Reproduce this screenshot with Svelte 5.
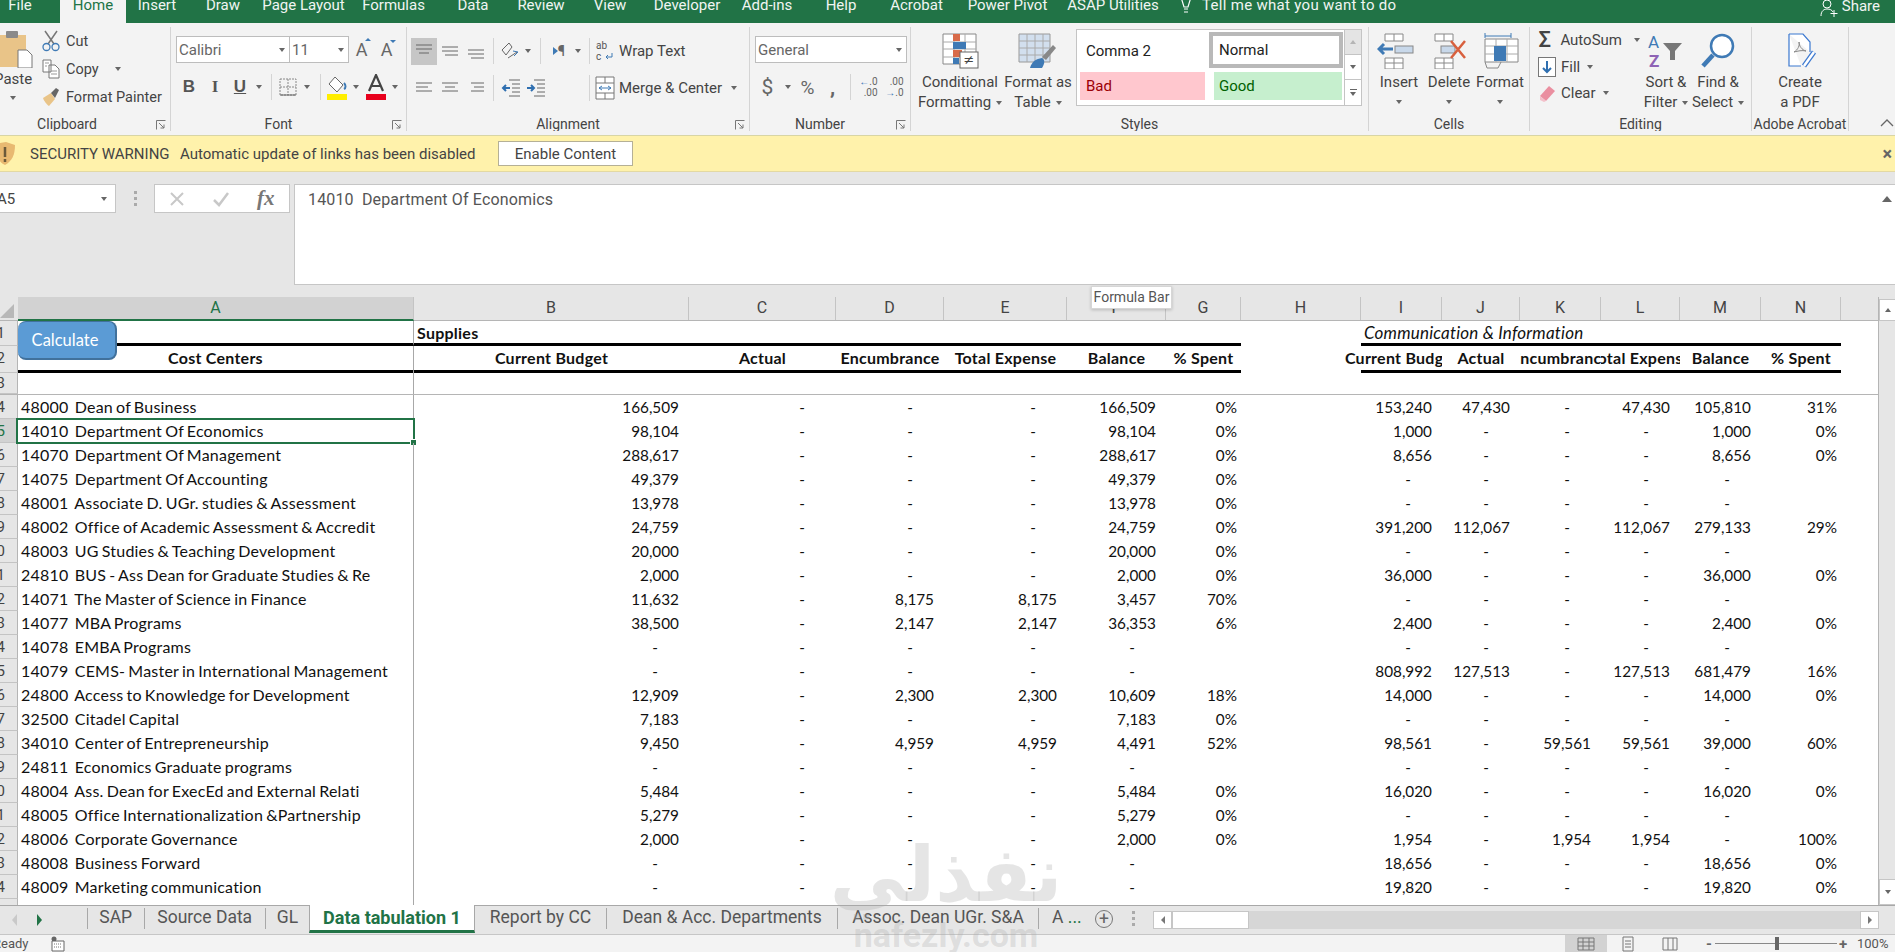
<script>
const tabs = [
  ['File',40],['Home',66],['Insert',62],['Draw',70],['Page Layout',91],['Formulas',89],['Data',70],['Review',66],['View',72],
  ['Developer',82],['Add-ins',78],['Help',70],['Acrobat',81],['Power Pivot',101],['ASAP Utilities',110]
];
const cols = [['A',396],['B',275],['C',147],['D',108],['E',123],['F',99],['G',75],['H',120],['I',81],['J',78],['K',81],['L',79],['M',81],['N',80],['',38]];
const D5 = ['-','-','-','-','-',''];
const rows = [
 ['48000  Dean of Business',['166,509','-','-','-','166,509','0%'],['153,240','47,430','-','47,430','105,810','31%']],
 ['14010  Department Of Economics',['98,104','-','-','-','98,104','0%'],['1,000','-','-','-','1,000','0%']],
 ['14070  Department Of Management',['288,617','-','-','-','288,617','0%'],['8,656','-','-','-','8,656','0%']],
 ['14075  Department Of Accounting',['49,379','-','-','-','49,379','0%'],D5],
 ['48001  Associate D. UGr. studies & Assessment',['13,978','-','-','-','13,978','0%'],D5],
 ['48002  Office of Academic Assessment & Accredit',['24,759','-','-','-','24,759','0%'],['391,200','112,067','-','112,067','279,133','29%']],
 ['48003  UG Studies & Teaching Development',['20,000','-','-','-','20,000','0%'],D5],
 ['24810  BUS - Ass Dean for Graduate Studies & Re',['2,000','-','-','-','2,000','0%'],['36,000','-','-','-','36,000','0%']],
 ['14071  The Master of Science in Finance',['11,632','-','8,175','8,175','3,457','70%'],D5],
 ['14077  MBA Programs',['38,500','-','2,147','2,147','36,353','6%'],['2,400','-','-','-','2,400','0%']],
 ['14078  EMBA Programs',D5,D5],
 ['14079  CEMS- Master in International Management',D5,['808,992','127,513','-','127,513','681,479','16%']],
 ['24800  Access to Knowledge for Development',['12,909','-','2,300','2,300','10,609','18%'],['14,000','-','-','-','14,000','0%']],
 ['32500  Citadel Capital',['7,183','-','-','-','7,183','0%'],D5],
 ['34010  Center of Entrepreneurship',['9,450','-','4,959','4,959','4,491','52%'],['98,561','-','59,561','59,561','39,000','60%']],
 ['24811  Economics Graduate programs',D5,D5],
 ['48004  Ass. Dean for ExecEd and External Relati',['5,484','-','-','-','5,484','0%'],['16,020','-','-','-','16,020','0%']],
 ['48005  Office Internationalization &Partnership',['5,279','-','-','-','5,279','0%'],D5],
 ['48006  Corporate Governance',['2,000','-','-','-','2,000','0%'],['1,954','-','1,954','1,954','-','100%']],
 ['48008  Business Forward',D5,['18,656','-','-','-','18,656','0%']],
 ['48009  Marketing communication',D5,['19,820','-','-','-','19,820','0%']]
];
const heads = ['Current Budget','Actual','Encumbrance','Total Expense','Balance','% Spent'];
const sheets = [['SAP',56.5],['Source Data',121.5],['GL',44],['Data tabulation 1',166],['Report by CC',131],['Dean & Acc. Departments',231],['Assoc. Dean UGr. S&A',201]];
const cls = (v) => (v === '-' ? 'dash' : v.includes('%') ? 'pct' : 'num');
</script>

{#snippet car()}<i class="car"></i>{/snippet}
{#snippet launcher()}<svg class="launch" viewBox="0 0 10 10" width="10" height="10"><path d="M.5 9.5V.5h9M3 3l5 5M8 4.500V8H4.500" fill="none" stroke="#777"/></svg>{/snippet}
{#snippet lines(a, b, c, d, y)}
  <svg width="20" height="20" viewBox="0 0 20 20"><path d="M{a} {y}H18M{b} {y+4}H{d}M{c} {y+8}H18" fill="none" stroke="#666" stroke-width="1"/></svg>
{/snippet}

<div class="app">
  <div class="tabbar">
    {#each tabs as t}
      <div class="tab" class:active={t[0]==='Home'} style="width:{t[1]}px">{t[0]}</div>
    {/each}
    <svg class="bulb" width="16" height="23" viewBox="0 0 16 23"><path d="M3 1l3 10h4l3-10M6 13h4M6 16h4" fill="none" stroke="#fff" stroke-width="1.200"/></svg>
    <div class="tab tell">Tell me what you want to do</div>
    <div class="share">
      <svg width="18" height="18" viewBox="0 0 18 18"><path d="M1 17c0-5 3-7 6-7s5 1 6 3M7 9a4 4 0 1 0 0-8 4 4 0 0 0 0 8M14 11v7M10.500 14.500h7" fill="none" stroke="#fff"/></svg>
      <span>Share</span>
    </div>
  </div>

  <div class="ribbon">
    <section class="grp g-clip">
      <div class="body clip-body">
        <div class="paste">
          <svg width="36" height="38" viewBox="0 0 36 38"><rect x="-4" y="5" width="30" height="32" fill="#e9c488"/><rect x="6" y="1" width="12" height="7" rx="1" fill="#8a8a8a"/><path d="M18 20h9l5 5v13H18z" fill="#fff" stroke="#777"/></svg>
          <span class="paste-t">Paste</span>
          {@render car()}
        </div>
        <div class="clip-rows">
          <div class="sm"><svg width="18" height="22" viewBox="0 0 18 22"><path d="M3 1l9 13M15 1L6 14" stroke="#777" stroke-width="1.500" fill="none"/><circle cx="4.500" cy="17" r="3.500" fill="none" stroke="#3f7ab5" stroke-width="1.300"/><circle cx="13.500" cy="17" r="3.500" fill="none" stroke="#3f7ab5" stroke-width="1.300"/></svg><span>Cut</span></div>
          <div class="sm"><svg width="18" height="20" viewBox="0 0 18 20"><path d="M1 1h8v12H1zM7 6h6l4 4v9H7z" fill="#fff" stroke="#777"/><path d="M3 4h4M3 7h2M9 12h6M9 15h6" stroke="#999"/></svg><span>Copy</span><i class="car ml10"></i></div>
          <div class="sm"><svg width="18" height="20" viewBox="0 0 18 20"><path d="M1 11l8-5 4 6-6 7c-2-1-5-5-6-8z" fill="#e9c488"/><path d="M9 6l5-5 3 2-4 8z" fill="#666"/></svg><span>Format Painter</span></div>
        </div>
      </div>
      <div class="lab off36"><span>Clipboard</span>{@render launcher()}</div>
    </section>

    <section class="grp g-font">
      <div class="body">
        <div class="font-r1">
          <div class="combo c-name"><span>Calibri</span>{@render car()}</div>
          <div class="combo c-size"><span>11</span>{@render car()}</div>
          <span class="aa">A<sup class="up"></sup></span>
          <span class="aa">A<sup class="dn"></sup></span>
        </div>
        <div class="font-r2 cells2">
          <b class="fmt">B</b><i class="fmt serif">I</i><u class="fmt ub">U</u>{@render car()}<em class="sep"></em>
          <svg width="18" height="18" viewBox="0 0 18 18"><path d="M1 1h16v16H1zM9 1v16M1 9h16" fill="none" stroke="#888" stroke-dasharray="2 1"/><path d="M1 17h16" stroke="#666"/></svg>{@render car()}<em class="sep"></em>
          <svg width="22" height="26" viewBox="0 0 22 26"><path d="M9 3l8 8-6 7-8-8z" fill="#fff" stroke="#666"/><path d="M18 9c2 2 2 5 0 6" stroke="#3f7ab5" stroke-width="2" fill="none"/><rect x="1" y="20" width="20" height="6" fill="#ffee00"/></svg>{@render car()}
          <svg width="22" height="26" viewBox="0 0 22 26"><path d="M4 17L11 1l7 16M7 12h8" fill="none" stroke="#444" stroke-width="2.200"/><rect x="1" y="20" width="20" height="6" fill="#e8001c"/></svg>{@render car()}
        </div>
      </div>
      <div class="lab off20"><span>Font</span>{@render launcher()}</div>
    </section>

    <section class="grp g-align">
      <div class="body">
        <div class="al-r1 cells2">
          <div class="hl"><svg width="20" height="20" viewBox="0 0 20 20"><path d="M2 4H18M2 8H18M5 12H15" stroke="#666" fill="none"/></svg></div>
          {@render lines(2,2,5,18,6)}
          {@render lines(2,2,5,18,9)}
          <em class="sep"></em>
          <svg width="20" height="20" viewBox="0 0 20 20"><path d="M2 9l7-7 3 4-6 8zM8 17l9-6" fill="none" stroke="#666"/><path d="M14 15l4-4-5-1" fill="none" stroke="#3f7ab5"/></svg>
          {@render car()}
          <em class="sep"></em>
          <span class="rtl"><i class="tri"></i>¶</span>
          {@render car()}
          <em class="sep"></em>
          <div class="sm wide"><svg class="wrapi" width="20" height="22" viewBox="0 0 20 22"><text x="1" y="9" font-size="10" font-family="Roboto" fill="#555">ab</text><text x="1" y="20" font-size="10" font-family="Roboto" fill="#555">c</text><path d="M17 13v4h-6m2-2l-2 2 2 2" fill="none" stroke="#3f7ab5"/></svg><span>Wrap Text</span></div>
        </div>
        <div class="al-r2 cells2">
          {@render lines(2,2,2,14,5)}
          {@render lines(2,5,2,15,5)}
          {@render lines(5,8,5,18,5)}
          <em class="sep"></em>
          <svg width="20" height="20" viewBox="0 0 20 20"><path d="M8 2h11M11 6h8M11 10h8M11 14h8M8 18h11" stroke="#666"/><path d="M9 10H2m3-3l-3 3 3 3" stroke="#2f6fb0" stroke-width="2" fill="none"/></svg>
          <svg width="20" height="20" viewBox="0 0 20 20"><path d="M8 2h11M11 6h8M11 10h8M11 14h8M8 18h11" stroke="#666"/><path d="M1 10h7m-3-3l3 3-3 3" stroke="#2f6fb0" stroke-width="2" fill="none"/></svg>
          <span></span>
          <em class="sep"></em>
          <div class="sm wide"><svg class="wrapi" width="20" height="24" viewBox="0 0 20 24"><path d="M1 1h18v22H1zM1 7h18M1 17h18M10 1v6M10 17v6" fill="#fff" stroke="#777"/><path d="M4 12h12m-3-2l3 2-3 2M7 10l-3 2 3 2" fill="none" stroke="#3f7ab5"/></svg><span>Merge &amp; Center</span><i class="car ml5"></i></div>
        </div>
      </div>
      <div class="lab off20"><span>Alignment</span>{@render launcher()}</div>
    </section>

    <section class="grp g-num">
      <div class="body">
        <div class="combo c-gen"><span>General</span>{@render car()}</div>
        <div class="num-r2 cells2">
          <span class="cur">$</span>{@render car()}<span class="cur pc">%</span><span class="cur cm">,</span><em class="sep"></em>
          <span class="dec"><i class="blue">←</i>.0<br/>.00</span><span class="dec">.00<br/><i class="blue">→</i>.0</span>
        </div>
      </div>
      <div class="lab off20"><span>Number</span>{@render launcher()}</div>
    </section>

    <section class="grp g-styles">
      <div class="body styles-body">
        <div class="big b-cf">
          <svg width="40" height="36" viewBox="0 0 40 36"><path d="M3 1h33v30H3z" fill="#fff" stroke="#888"/><path d="M14 1v30M25 1v30M3 9h33M3 16h33M3 24h33" stroke="#aaa"/><rect x="13" y="1" width="7" height="7" fill="#d86b4a"/><rect x="13" y="9" width="13" height="7" fill="#3f7ab5"/><rect x="13" y="17" width="9" height="7" fill="#d86b4a"/><rect x="13" y="25" width="6" height="6" fill="#3f7ab5"/><rect x="20" y="19" width="18" height="16" fill="#fff" stroke="#666"/><text x="29" y="31" font-size="13" text-anchor="middle" font-family="DejaVu Sans" fill="#444">≠</text></svg>
          <span>Conditional</span><span>Formatting<i class="car ml5"></i></span>
        </div>
        <div class="big b-ft">
          <svg width="40" height="36" viewBox="0 0 40 36"><path d="M1 1h31v28H1z" fill="#d2dfee" stroke="#999"/><path d="M1 8h31M1 15h31M1 22h31M9 1v28M17 1v28M25 1v28" stroke="#aaa"/><path d="M24 24L35 12l3 3-10 12z" fill="#888"/><path d="M12 35c2-7 6-9 12-10 3 2 3 5 0 10z" fill="#3f7ab5"/></svg>
          <span>Format as</span><span>Table<i class="car ml5"></i></span>
        </div>
        <div class="gallery">
          <div class="gmain">
            <div class="st st-c">Comma 2</div>
            <div class="st st-n">Normal</div>
            <div class="st st-b">Bad</div>
            <div class="st st-g">Good</div>
          </div>
          <div class="gscroll">
            <div class="gs up-b"><i class="car flip"></i></div>
            <div class="gs"><i class="car"></i></div>
            <div class="gs last"><div class="mbar"></div><i class="car"></i></div>
          </div>
        </div>
      </div>
      <div class="lab"><span>Styles</span></div>
    </section>

    <section class="grp g-cells">
      <div class="body cells-body">
        <div class="big b-c">
          <svg width="44" height="36" viewBox="0 0 44 36"><path d="M8 1h18v7H8zM17 1v7M8 25h18v11H8zM17 25v11M8 30h18" fill="#fff" stroke="#888"/><rect x="18" y="13" width="18" height="7" fill="#c8d8ea" stroke="#888"/><path d="M2 16h14M7 11l-5 5 5 5" fill="none" stroke="#3f7ab5" stroke-width="3"/></svg>
          <span>Insert</span>{@render car()}
        </div>
        <div class="big b-c">
          <svg width="44" height="36" viewBox="0 0 44 36"><path d="M8 1h18v7H8zM17 1v7M8 25h18v11H8zM17 25v11M8 30h18" fill="#fff" stroke="#888"/><rect x="14" y="13" width="14" height="7" fill="#c8d8ea" stroke="#888"/><path d="M24 8l14 17M38 8L24 25" stroke="#d8603e" stroke-width="2.500"/></svg>
          <span>Delete</span>{@render car()}
        </div>
        <div class="big b-c w52">
          <svg width="44" height="36" viewBox="0 0 44 36"><path d="M7 6h33v23H7z" fill="#fff" stroke="#888"/><path d="M18 6v23M29 6v23M7 13h33M7 21h33" stroke="#aaa"/><rect x="16" y="13" width="12" height="15" fill="#3f7ab5"/><path d="M7 3h26M7 0v5M33 0v5" stroke="#3f7ab5"/><path d="M7 29l2 6h11l3-6" fill="none" stroke="#888"/></svg>
          <span>Format</span>{@render car()}
        </div>
      </div>
      <div class="lab"><span>Cells</span></div>
    </section>

    <section class="grp g-edit">
      <div class="body edit-body">
        <div class="edit-rows">
          <div class="sm"><span class="sigma">Σ</span><span>AutoSum</span><i class="car ml10"></i></div>
          <div class="sm"><svg width="18" height="20" viewBox="0 0 18 20"><rect x=".5" y=".5" width="17" height="19" fill="#fff" stroke="#777"/><path d="M9 4v11M5 11l4 4 4-4" fill="none" stroke="#2f6fb0" stroke-width="2"/></svg><span>Fill</span><i class="car ml5"></i></div>
          <div class="sm"><svg width="18" height="20" viewBox="0 0 18 20"><path d="M2 13L11 3l6 5-9 10z" fill="#ea8fa0"/><path d="M2 13l6 5-2 1-4-2z" fill="#f3c0ca"/></svg><span>Clear</span><i class="car ml5"></i></div>
        </div>
        <div class="big b-e">
          <svg width="40" height="36" viewBox="0 0 40 36"><text x="2" y="15" font-size="17" font-family="Roboto" fill="#3f7ab5">A</text><text x="3" y="34" font-size="17" font-family="Roboto" font-weight="700" fill="#8e63b5">Z</text><path d="M17 10h19l-7 8v9h-5v-9z" fill="#777"/></svg>
          <span>Sort &amp;</span><span>Filter<i class="car ml5"></i></span>
        </div>
        <div class="big b-e">
          <svg width="40" height="36" viewBox="0 0 40 36"><circle cx="24" cy="13" r="11" fill="#fff" stroke="#3f7ab5" stroke-width="2.500"/><path d="M15 22L5 33" stroke="#3f7ab5" stroke-width="4.500"/></svg>
          <span>Find &amp;</span><span>Select<i class="car ml5"></i></span>
        </div>
      </div>
      <div class="lab"><span>Editing</span></div>
    </section>

    <section class="grp g-acro">
      <div class="body acro-body">
        <div class="big">
          <svg width="40" height="36" viewBox="0 0 40 36"><path d="M9 1h14l7 8v10M9 1v32h12" fill="#fff" stroke="#3b78d0" stroke-width="1.200"/><path d="M14 19c4-2 6-7 5-10 0 4 3 8 7 9-4-1-8 0-12 1z" fill="none" stroke="#888"/><path d="M24 33l10-14" stroke="#3b78d0" stroke-width="5" fill="none"/><path d="M24 33l10-14" stroke="#fff" stroke-width="2.500" fill="none"/></svg>
          <span>Create</span><span>a PDF</span>
        </div>
      </div>
      <div class="lab"><span>Adobe Acrobat</span></div>
    </section>

    <svg class="collapse" width="14" height="8" viewBox="0 0 14 8"><path d="M1 7l6-6 6 6" fill="none" stroke="#666" stroke-width="1.300"/></svg>
  </div>

  <div class="secbar">
    <svg class="shield" width="16" height="24" viewBox="0 0 16 24"><path d="M-6 2L6 0l9 3c0 10-3 16-10 20C-2 20-6 10-6 2z" fill="#e8b971"/><path d="M5 5v10M5 17v3" stroke="#6b5a3a" stroke-width="2.500"/></svg>
    <span class="sec-t">SECURITY WARNING</span>
    <span class="sec-m">Automatic update of links has been disabled</span>
    <button class="enable">Enable Content</button>
    <span class="sec-x">×</span>
  </div>

  <div class="fbar">
    <div class="namebox"><span>A5</span>{@render car()}</div>
    <div class="dots"><i></i><i></i><i></i></div>
    <div class="fbtns">
      <svg width="16" height="16" viewBox="0 0 16 16"><path d="M2 2l12 12M14 2L2 14" stroke="#c8c8c8" stroke-width="2"/></svg>
      <svg width="18" height="16" viewBox="0 0 18 16"><path d="M2 9l5 5L16 2" fill="none" stroke="#c8c8c8" stroke-width="2.500"/></svg>
      <span class="fx">fx</span>
    </div>
    <div class="finput">
      <span class="ftext">14010  Department Of Economics</span>
      <svg class="fcol" width="10" height="6" viewBox="0 0 10 6"><path d="M0 6l5-6 5 6z" fill="#666"/></svg>
    </div>
  </div>

  <div class="sheet">
    <div class="grid">
      <div class="colhead">
        <div class="corner"><i></i></div>
        {#each cols as c}
          <div class="ch" class:sel={c[0]==='A'} style="width:{c[1]}px">{c[0]}</div>
        {/each}
      </div>

      <div class="row r1 heavy">
        <div class="rh">1</div>
        <div class="c a"></div>
        <div class="c sup">Supplies</div>
        <div class="c span5"></div>
        <div class="c gapH"></div>
        <div class="c comm"><span>Communication &amp; Information</span></div>
        <div class="c tail"></div>
      </div>
      <div class="row r2 heavy">
        <div class="rh">2</div>
        <div class="c a hc">Cost Centers</div>
        {#each heads as h, i}<div class="c hd h{i}">{h}</div>{/each}
        <div class="c gapH"></div>
        {#each heads as h, i}<div class="c hd k{i}">{h}</div>{/each}
        <div class="c tail"></div>
      </div>
      <div class="row r3">
        <div class="rh">3</div>
        <div class="c a"></div>
      </div>

      {#each rows as r, n}
        <div class="row" class:cur-row={n===1}>
          <div class="rh">{n+4}</div>
          <div class="c a txt">{r[0]}{#if n===1}<i class="selbox"></i>{/if}</div>
          {#each r[1] as v, i}<div class="c {cls(v)} h{i}">{v}</div>{/each}
          <div class="c gapH"></div>
          {#each r[2] as v, i}<div class="c {cls(v)} k{i}">{v}</div>{/each}
          <div class="c tail"></div>
        </div>
      {/each}
      <div class="row rlast"><div class="rh"></div><div class="c a"></div></div>

      <button class="calc">Calculate</button>
    </div>
    <div class="vscroll">
      <div class="vb"><i class="car flip"></i></div>
      <div class="vb bot"><i class="car"></i></div>
    </div>
    <div class="tooltip">Formula Bar</div>
  </div>

  <div class="tabstrip">
    <div class="nav"><span class="navl"></span><span class="navr"></span></div>
    {#each sheets as s}
      <div class="sh" class:on={s[0]==='Data tabulation 1'} style="width:{s[1]}px">{s[0]}</div>
    {/each}
    <div class="more">A <b>...</b></div>
    <div class="plus">+</div>
    <div class="dots hd3"><i></i><i></i><i></i></div>
    <div class="hbar">
      <div class="hb"><i class="tl"></i></div>
      <div class="thumb"></div>
      <div class="track"></div>
      <div class="hb"><i class="tr"></i></div>
    </div>
  </div>

  <div class="status">
    <span class="ready">Ready</span>
    <svg class="macro" width="14" height="16" viewBox="0 0 14 16"><circle cx="3" cy="3" r="2.500" fill="#666"/><path d="M1 5h12v10H1z" fill="#fff" stroke="#666"/><path d="M3 8h8M3 11h8" stroke="#777" stroke-dasharray="1 1"/></svg>
    <div class="views">
      <div class="v on"><svg width="18" height="14" viewBox="0 0 18 14"><path d="M1 1h16v12H1zM6 1v12M12 1v12M1 5h16M1 9h16" fill="none" stroke="#777"/></svg></div>
      <div class="v"><svg width="12" height="16" viewBox="0 0 12 16"><path d="M1 1h10v14H1zM3 5h6M3 8h6M3 11h6" fill="none" stroke="#777"/></svg></div>
      <div class="v"><svg width="18" height="14" viewBox="0 0 18 14"><path d="M2 1h14v12H2zM7 1v12M12 1v12" fill="none" stroke="#777"/></svg></div>
    </div>
    <div class="zoom">
      <span class="zm">-</span>
      <div class="zline"><i></i></div>
      <span class="zm">+</span>
      <span class="zp">100%</span>
    </div>
  </div>

  <div class="wm" aria-hidden="true">
    <div class="wm1">نفذلي</div>
    <div class="wm2">nafezly.com</div>
  </div>
</div>

<style>
:global(body){margin:0;background:#e6e6e6;}
.app{position:relative;width:1895px;height:952px;overflow:hidden;font-family:Roboto,sans-serif;color:#444;display:flex;flex-direction:column;}
i,em{font-style:normal;display:block;}
.car{display:inline-block;width:0;height:0;border:3.5px solid transparent;border-top:4px solid #666;border-bottom:0;flex:none;vertical-align:middle;}
.car.flip{transform:rotate(180deg);}
.ml5{margin-left:5px}.ml10{margin-left:10px}

/* title tabs */
.tabbar{height:23px;background:#217346;display:flex;overflow:hidden;color:#f0f5f2;font-size:15px;flex:none;}
.tab{height:28px;line-height:20px;margin-top:-5px;text-align:center;flex:none;}
.tab.active{background:#f3f3f3;color:#217346;margin-left:20px;}
.bulb{margin-left:10px;margin-top:-4px;flex:none;}
.tell{margin-left:8px;letter-spacing:.3px;}
.share{margin-left:auto;padding-right:15px;display:flex;align-items:flex-start;gap:4px;}
.share svg{margin-top:-1px;}
.share span{line-height:16px;margin-top:-2px;}

/* ribbon */
.ribbon{height:112px;flex:none;background:#f3f3f3;display:flex;padding:4px 0;box-sizing:border-box;font-size:15px;color:#444;white-space:nowrap;}
.grp{height:104px;display:flex;flex-direction:column;border-right:1px solid #d4d4d4;box-sizing:border-box;flex:none;overflow:hidden;}
.g-clip{width:171px}.g-font{width:236px}.g-align{width:343px}.g-num{width:161px}.g-styles{width:458px}.g-cells{width:161px}.g-edit{width:222px}.g-acro{width:97px}
.body{height:89px;flex:none;}
.lab{height:14px;line-height:14px;font-size:14px;text-align:center;position:relative;color:#444;margin-top:1px;box-sizing:border-box;}
.off36{padding-right:36px;}
.off20{padding-right:20px;}
.launch{position:absolute;right:4px;top:3px;}
.sm{display:flex;align-items:center;gap:6px;height:28px;}
.cells2{display:grid;align-items:center;justify-items:center;}
.sep{width:1px;height:26px;background:#d4d4d4;}

.clip-body{display:grid;grid-template-columns:42px 1fr;}
.paste{display:flex;flex-direction:column;align-items:flex-start;padding-top:3px;}
.paste-t{margin:0 0 0 -6px;line-height:18px;margin-top:2px;}
.paste .car{margin:8px 0 0 10px;}
.clip-rows .sm{height:28px;font-size:14.500px;}

.font-r1{display:flex;align-items:center;margin:9px 0 0 5px;height:27px;}
.combo{height:27px;box-sizing:border-box;border:1px solid #bdbdbd;background:#fff;display:flex;align-items:center;justify-content:space-between;padding:0 4px 0 2px;color:#666;font-size:15px;}
.c-name{width:114px}.c-size{width:60px;margin-left:-1px;}
.c-gen{width:152px;margin:9px 0 0 5px;}
.aa{width:25px;text-align:center;font-size:18px;color:#666;position:relative;}
.aa sup{position:absolute;right:3px;width:0;height:0;border:3px solid transparent;}
.aa .up{top:-1px;border-bottom:3px solid #3f7ab5;border-top:0}
.aa .dn{top:1px;border-top:3px solid #3f7ab5;border-bottom:0}
.font-r2{grid-template-columns:26px 26px 24px 14px 10px 24px 14px 12px 22px 16px 24px 14px;margin:11px 0 0 5px;height:26px;}
.fmt{font-size:17px;color:#555;font-family:"Liberation Sans",sans-serif;}
.serif{font-family:"Liberation Serif",serif;font-weight:700;}
.ub{font-weight:700;}

.al-r1{grid-template-columns:26px 26px 25px 10px 24px 12px 12px 26px 11px 12px 150px;margin:10px 0 0 4px;height:27px;}
.al-r2{grid-template-columns:26px 26px 25px 10px 25px 26px 34px 12px 150px;margin:10px 0 0 4px;height:26px;}
.hl{width:26px;height:27px;background:#c6c6c6;display:flex;align-items:center;justify-content:center;}
.rtl{display:flex;align-items:center;font-size:15px;color:#666;}
.tri{width:0;height:0;border:4px solid transparent;border-left:5px solid #3f7ab5;border-right:0;}
.wide{justify-self:start;gap:4px;}

.num-r2{grid-template-columns:25px 15px 25px 25px 11px 25px 27px;margin:11px 0 0 5px;height:26px;}
.cur{font-size:21px;color:#666;}
.pc{font-size:19px;}
.cm{font-weight:700;line-height:16px;}
.dec{font-size:10px;line-height:11px;color:#666;text-align:right;}
.dec i{display:inline;color:#2f6fb0;font-weight:700;}

.styles-body{display:flex;padding-left:9px;}
.big{display:flex;flex-direction:column;align-items:center;padding-top:6px;box-sizing:border-box;height:89px;line-height:20px;flex:none;}
.big svg{height:36px;margin-bottom:3px;flex:none;}
.big .car{margin-top:8px;}
.big span .car{margin-top:0;}
.b-cf{width:80px}.b-ft{width:76px}
.gallery{margin:2px 0 0 0;width:286px;height:77px;box-sizing:border-box;border:1px solid #c4c4c4;background:#fff;display:flex;color:#222;}
.gmain{width:267px;flex:none;display:grid;grid-template-columns:132px 135px;grid-template-rows:41px 34px;}
.gscroll{flex:1;display:flex;flex-direction:column;}
.st{display:flex;align-items:center;box-sizing:border-box;font-size:15px;}
.st-c{padding-left:9px;}
.st-n{border:4px solid #b9b9b9;height:36px;margin:2px 1px 0 0;padding-left:6px;}
.st-b{background:#ffc7ce;color:#9c0006;margin:1px 4px 5px 3px;padding-left:6px;}
.st-g{background:#c6efce;color:#006100;margin:1px 2px 5px 5px;padding-left:5px;}
.gs{height:25px;display:flex;align-items:center;justify-content:center;flex-direction:column;gap:2px;border-left:1px solid #c4c4c4;border-bottom:1px solid #c4c4c4;box-sizing:border-box;}
.up-b{background:#e4e4e4;}
.up-b .car{border-top-color:#b5b5b5;}
.gs.last{border-bottom:0;}
.mbar{width:7px;height:1px;background:#666;}

.cells-body{display:flex;padding-left:5px;}
.b-c{width:50px}.w52{width:52px}
.edit-body{display:flex;padding-left:8px;}
.edit-rows{width:102px;flex:none;}
.edit-rows .sm{height:26.500px;gap:9px;}
.edit-rows svg + span{margin-left:-4px;}
.edit-rows .sm .car{margin-left:-2px;}
.edit-rows .sm .ml10{margin-left:3px;}
.sigma{font-size:22px;width:18px;text-align:center;color:#444;font-weight:500;line-height:20px;}
.b-e{width:52px}
.acro-body{display:flex;justify-content:center;}
.collapse{align-self:flex-end;margin:0 0 4px 31px;}

/* security bar */
.secbar{height:37px;box-sizing:border-box;flex:none;background:#fff2ab;border-top:1px solid #d8d5a5;border-bottom:1px solid #e3d9a3;display:flex;align-items:center;font-size:15px;color:#444;position:relative;}
.shield{flex:none;}
.sec-t{margin-left:14px;width:150px;flex:none;}
.sec-m{flex:none;width:318px;}
.enable{width:135px;height:25px;box-sizing:border-box;background:#fff;border:1px solid #b5b096;font:15px Roboto,sans-serif;color:#444;padding:0;}
.sec-x{position:absolute;right:3px;font-size:18px;font-weight:700;color:#666;}

/* formula bar */
.fbar{height:125px;flex:none;display:flex;background:#e6e6e6;align-items:flex-start;padding-top:12px;box-sizing:border-box;}
.namebox{width:116px;height:29px;box-sizing:border-box;background:#fff;border:1px solid #c6c6c6;border-left:0;display:flex;justify-content:space-between;align-items:center;padding-right:8px;color:#444;font-size:15px;}
.namebox span{margin-left:-3px;}
.dots{width:38px;flex:none;height:29px;display:flex;flex-direction:column;justify-content:center;align-items:center;gap:3px;}
.dots i{width:3px;height:3px;background:#aaa;}
.fbtns{width:136px;height:29px;box-sizing:border-box;background:#fff;border:1px solid #c6c6c6;display:flex;align-items:center;justify-content:space-around;padding:0 1px;flex:none;}
.fx{font:italic 700 21px "Liberation Serif",serif;color:#777;}
.finput{margin-left:4px;flex:1;height:101px;box-sizing:border-box;background:#fff;border:1px solid #c6c6c6;border-right:0;position:relative;padding:5px 0 0 13px;font-size:16px;letter-spacing:.15px;color:#555;}
.ftext{white-space:pre;}
.fcol{position:absolute;right:3px;top:11px;}

/* sheet */
.sheet{height:608px;flex:none;display:flex;background:#fff;position:relative;}
.grid{width:1879px;flex:none;position:relative;overflow:hidden;font-family:Lato,sans-serif;font-size:15.300px;color:#111;border-right:1px solid #b5b5b5;box-sizing:border-box;--col:396px 275px 147px 108px 123px 99px 75px 120px 81px 78px 81px 79px 81px 80px 38px;}
.colhead{display:flex;height:24px;background:#e6e6e6;border-bottom:1px solid #b5b5b5;box-sizing:border-box;font-family:Roboto,sans-serif;font-size:16px;color:#444;}
.corner{width:18px;flex:none;position:relative;}
.corner i{position:absolute;left:0;bottom:2px;width:0;height:0;border-bottom:14px solid #b8b8b8;border-left:14px solid transparent;}
.ch{flex:none;box-sizing:border-box;border-right:1px solid #c4c4c4;text-align:center;line-height:22px;}
.ch.sel{background:#d2d2d2;color:#217346;border-bottom:2px solid #217346;height:24px;}
.row{display:grid;grid-template-columns:18px var(--col);height:24px;line-height:24px;white-space:nowrap;}
.rh{background:#e6e6e6;border-right:1px solid #b5b5b5;border-bottom:1px solid #c4c4c4;box-sizing:border-box;display:flex;justify-content:flex-end;padding-right:12px;font-family:Roboto,sans-serif;font-size:15px;color:#444;overflow:hidden;}
.cur-row .rh{background:#d2d2d2;color:#217346;}
.c{overflow:hidden;box-sizing:border-box;position:relative;}
.a{border-right:1px solid #a8a8a8;overflow:visible;}
.txt{padding-left:3px;white-space:pre;overflow:hidden;font-size:16px;letter-spacing:.22px;word-spacing:-1.200px;}
.num{text-align:right;padding-right:10px;}
.dash{text-align:right;padding-right:31px;}
.pct{text-align:right;padding-right:4px;}
.hd{font-weight:700;display:flex;justify-content:center;font-size:16px;letter-spacing:.25px;}
.hc{font-weight:700;text-align:center;font-size:16px;letter-spacing:.25px;}
.k0.hd{overflow:visible;}
.k1.hd{background:#fff;}
.r1,.r2{position:relative;height:25px;}
.r1 .rh,.r2 .rh{border-bottom:1px solid #c4c4c4;}
.r1 .c:not(.gapH):not(.tail),.r2 .c:not(.gapH):not(.tail){border-bottom:3px solid #000;}
.r3{height:24px;border-bottom:1px solid #b5b5b5;box-sizing:border-box;}
.sup{font-weight:700;padding-left:3px;font-size:16px;letter-spacing:.25px;}
.span5{grid-column:span 5;}
.comm{grid-column:span 6;font-style:italic;padding-left:3px;font-size:17px;letter-spacing:.2px;}
.selbox{position:absolute;left:-2px;top:-1px;right:-2px;bottom:-1px;border:2px solid #217346;pointer-events:none;}
.selbox::after{content:"";position:absolute;right:-4px;bottom:-4px;width:5px;height:5px;background:#217346;border:1px solid #fff;}
.txt:has(.selbox){overflow:visible;}
.calc{position:absolute;left:18px;top:24px;width:99px;height:39px;box-sizing:border-box;background:#5b9bd5;color:#fff;border:2px solid #41719c;border-left:0;border-top:1px solid #41719c;border-radius:8px;font:16.500px Lato,sans-serif;padding:0 3px 0 0;}
.tooltip{position:absolute;left:1091px;top:-11px;width:81px;height:23px;box-sizing:border-box;background:#fff;border:1px solid #d6d6d6;box-shadow:0 1px 3px rgba(0,0,0,.2);font:14px Roboto,sans-serif;color:#555;text-align:center;line-height:21px;white-space:nowrap;z-index:2;}
.vscroll{flex:1;background:#e6e6e6;display:flex;flex-direction:column;justify-content:space-between;padding-top:2px;}
.vb{height:22px;background:#fff;border:1px solid #c6c6c6;border-right:0;display:flex;align-items:center;justify-content:center;box-sizing:border-box;}
.vb.bot{height:26px;}

/* sheet tabs */
.tabstrip{height:29px;flex:none;background:#e6e6e6;border-top:1px solid #a8a8a8;box-sizing:border-box;display:flex;font-size:17.500px;color:#555;white-space:nowrap;}
.nav{width:87px;flex:none;display:flex;align-items:center;padding-left:12px;gap:20px;box-sizing:border-box;}
.navl{width:0;height:0;border:6px solid transparent;border-right:5px solid #c9c9c9;border-left:0;}
.navr{width:0;height:0;border:6px solid transparent;border-left:5px solid #217346;border-right:0;}
.sh{flex:none;box-sizing:border-box;border-left:1px solid #a8a8a8;text-align:center;line-height:19px;height:21px;margin-top:2px;overflow:hidden;}
.sh.on{background:#fff;height:28px;margin-top:-1px;line-height:25px;color:#217346;font-weight:700;border:1px solid #a8a8a8;border-top:0;border-bottom:3px solid #217346;font-size:18px;}
.sh.on + .sh{border-left:0;}
.more{width:52px;flex:none;border-left:1px solid #a8a8a8;height:21px;margin-top:2px;line-height:19px;padding-left:13px;box-sizing:border-box;}
.more b{font-weight:400;color:#217346;}
.plus{width:18px;height:18px;border:1px solid #777;border-radius:50%;box-sizing:border-box;flex:none;margin:4px 0 0 5px;text-align:center;line-height:16px;color:#666;}
.hd3{width:40px;height:24px;}
.hbar{display:flex;width:726px;flex:none;height:18px;margin-top:5px;background:#d6d6d6;}
.hb{width:19px;height:18px;background:#fff;border:1px solid #c6c6c6;box-sizing:border-box;display:flex;align-items:center;justify-content:center;flex:none;}
.tl{width:0;height:0;border:4px solid transparent;border-right:4px solid #777;border-left:0;}
.tr{width:0;height:0;border:4px solid transparent;border-left:4px solid #777;border-right:0;}
.thumb{width:77px;height:18px;box-sizing:border-box;background:#fff;border:1px solid #c6c6c6;flex:none;}
.track{flex:1;}

/* status */
.status{height:18px;flex:none;background:#f3f3f3;border-top:1px solid #c6c6c6;box-sizing:border-box;display:flex;align-items:center;font-size:13px;color:#555;overflow:hidden;}
.ready{margin-left:-7px;width:56px;flex:none;}
.macro{flex:none;margin-left:2px;}
.views{display:flex;margin-left:auto;align-items:center;}
.v{width:42px;height:18px;display:flex;align-items:center;justify-content:center;}
.v.on{background:#d2d2d2;}
.zoom{display:flex;align-items:center;margin-left:12px;width:197px;margin-right:-5px;flex:none;}
.zm{width:12px;text-align:center;font-weight:700;font-size:15px;color:#666;flex:none;}
.zline{width:122px;height:1px;background:#888;position:relative;flex:none;}
.zline i{position:absolute;left:60px;top:-6px;width:4px;height:13px;background:#666;}
.zp{margin-left:8px;}

/* watermark */
.wm{position:absolute;left:826px;top:834px;width:240px;pointer-events:none;text-align:center;color:rgba(170,170,170,.3);white-space:nowrap;}
.wm1{font:700 76px/82px "DejaVu Sans",sans-serif;}
.wm2{font:700 34px/34px Roboto,sans-serif;margin:2px 0 0 0;}
</style>
